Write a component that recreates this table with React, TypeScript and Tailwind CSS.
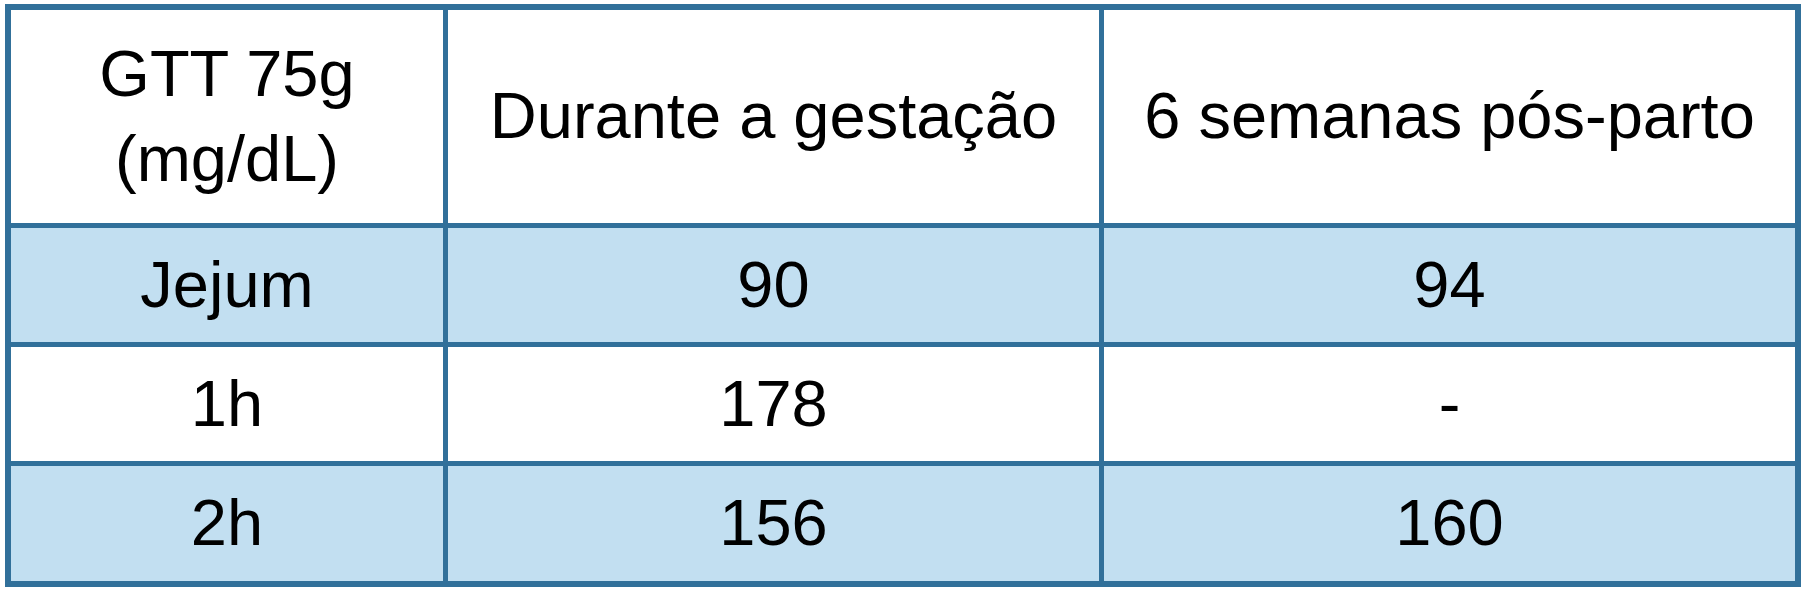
const header = ['Durante a gestação', '6 semanas pós-parto']

const rows: { label: string; during: string; post: string; shaded: boolean }[] = [
  { label: 'Jejum', during: '90', post: '94', shaded: true },
  { label: '1h', during: '178', post: '-', shaded: false },
  { label: '2h', during: '156', post: '160', shaded: true },
]

function Cell({ children, shaded }: { children: React.ReactNode; shaded?: boolean }) {
  return (
    <div
      className={
        'flex items-center justify-center text-center ' +
        (shaded ? 'bg-[#c2dff1]' : 'bg-white')
      }
    >
      {children}
    </div>
  )
}

export default function App() {
  return (
    <div className="h-[592px] w-[1808px] bg-white pl-[5px] pt-[4px] font-['Liberation_Sans',Arial,sans-serif] text-[65px] leading-[1.3] text-black">
      <div className="grid w-fit grid-cols-[432px_651px_691px] grid-rows-[213px_114px_114px_115px] gap-[5px] bg-[#31709a] p-[6px]">
        {/* header row */}
        <Cell>
          <span>
            GTT 75g
            <br />
            (mg/dL)
          </span>
        </Cell>
        {header.map((h) => (
          <Cell key={h}>{h}</Cell>
        ))}

        {/* data rows */}
        {rows.map((r) => (
          <div key={r.label} className="contents">
            <Cell shaded={r.shaded}>{r.label}</Cell>
            <Cell shaded={r.shaded}>{r.during}</Cell>
            <Cell shaded={r.shaded}>{r.post}</Cell>
          </div>
        ))}
      </div>
    </div>
  )
}
